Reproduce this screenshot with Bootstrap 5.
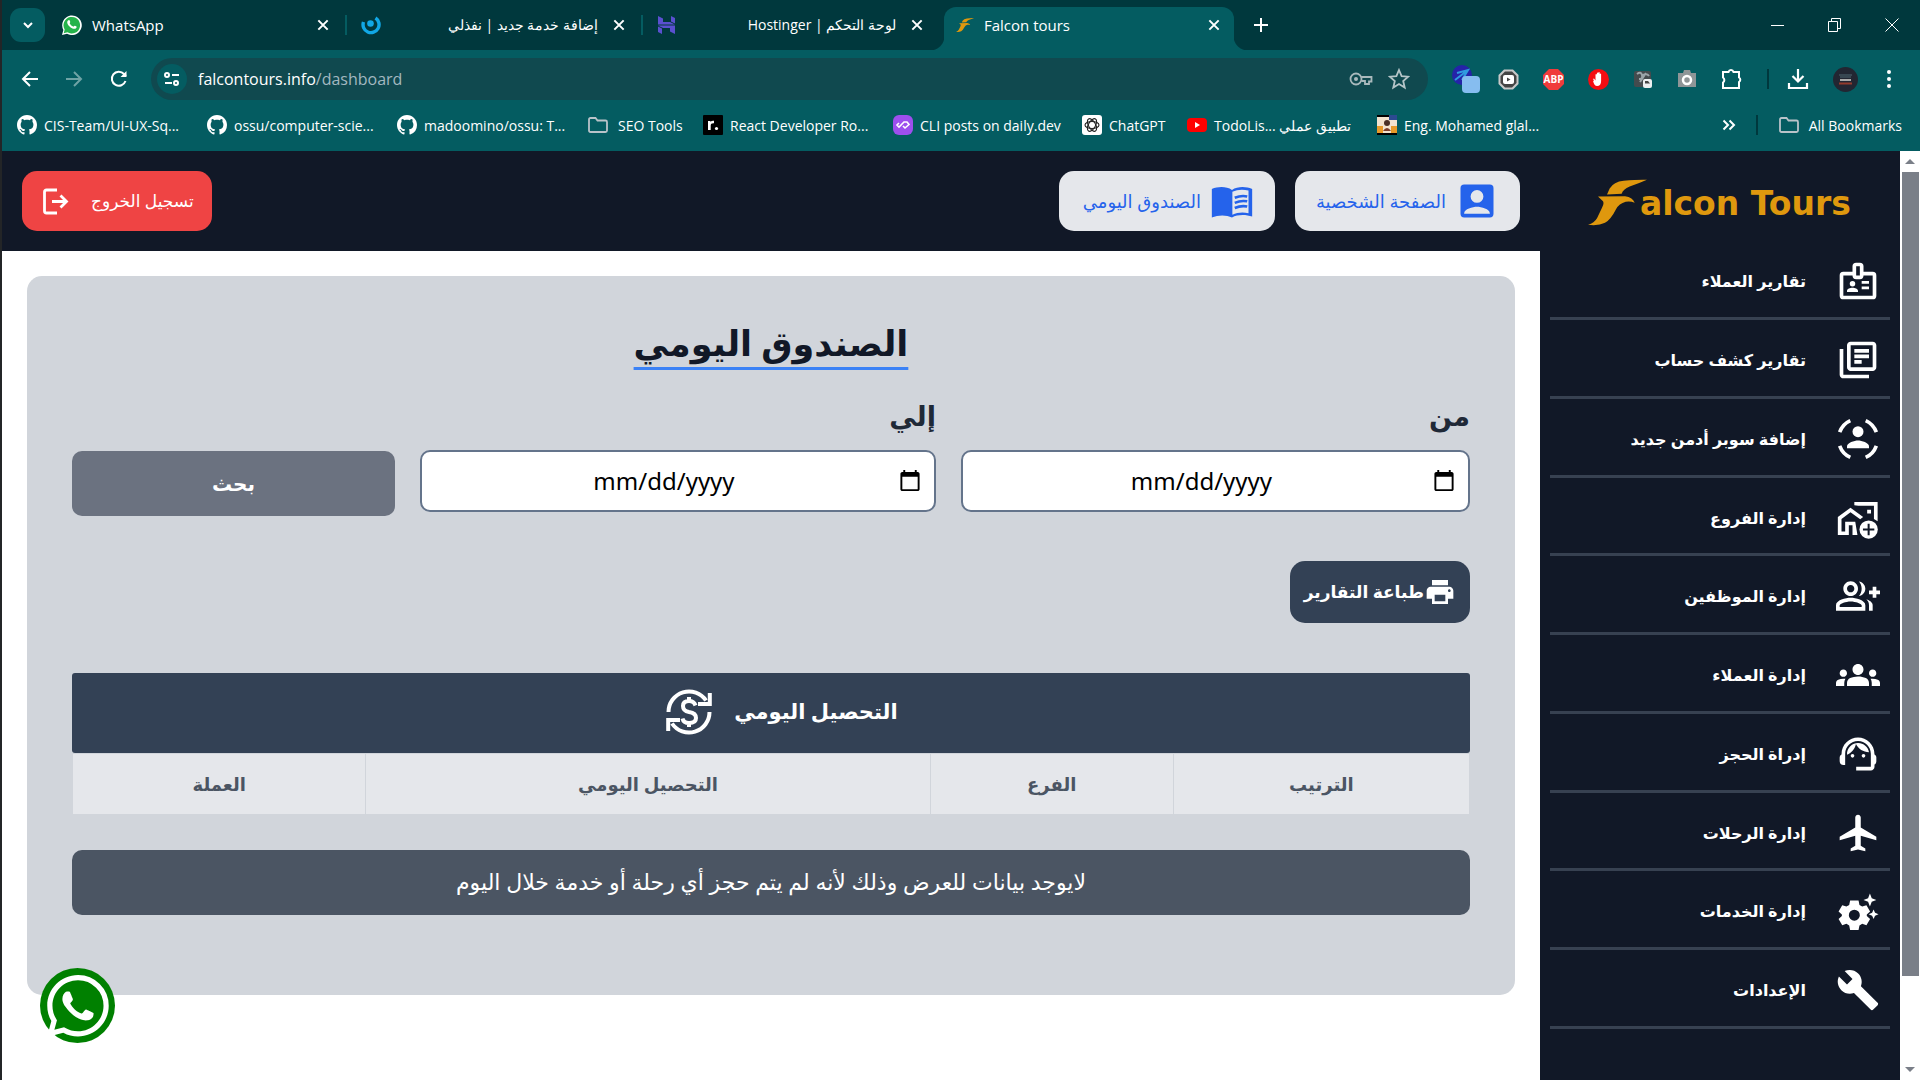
<!DOCTYPE html>
<html lang="ar">
<head>
<meta charset="utf-8">
<meta name="viewport" content="width=device-width, initial-scale=1">
<title>Falcon tours</title>
<link href="https://cdn.jsdelivr.net/npm/bootstrap@5.3.0/dist/css/bootstrap.min.css" rel="stylesheet">
<style>
  :root { --ui: "Open Sans", "Noto Sans", sans-serif; --ar: "Noto Sans", "DejaVu Sans", sans-serif; }
  body { font-family: var(--ui); background: #fff; border-left: 2px solid #232527; min-height: 100vh; overflow: hidden; }
  svg { display: block; flex: none; fill: currentColor; }
  button { border: 0; }
  .plain { background: none; padding: 0; color: inherit; }

  /* browser frame */
  .chrome { background: #045c61; color: #fff; font-size: 15px; }
  .tabstrip { background: #00383d; height: 50px; }
  .tab-search { width: 35px; height: 34px; border-radius: 11px; background: #045c61; color: #fff; margin: 8px 3px 8px 8px; }
  .tab-item { width: 296px; padding: 0 15px 0 14px; height: 40px; gap: 10px; line-height: 20px; }
  .tab-item.first { width: 299px; }
  .tab-item [dir=rtl] { font-size: 14px; padding-right: 4px; }
  .tab-item.split { border-right: 2px solid #045c61; height: 20px; }
  .tab-item.current { width: 290px; margin-left: 5px; height: 43px; margin-top: 7px; padding: 0 13px 7px 12px; background: #045c61; border-radius: 12px 12px 0 0; position: relative; }
  .tab-item.current::before, .tab-item.current::after { content: ""; position: absolute; bottom: 0; width: 14px; height: 14px; }
  .tab-item.current::before { left: -14px; background: radial-gradient(circle at 0 0, #00383d 14px, #045c61 15px); }
  .tab-item.current::after { right: -14px; background: radial-gradient(circle at 100% 0, #00383d 14px, #045c61 15px); }
  .gold { color: #df980e; }
  .win-controls { gap: 43px; padding-right: 21px; }
  .tools { height: 58px; padding: 0 28px 0 18px; gap: 20px; }
  .exts { gap: 24px; }
  .ext-near { margin-left: -6px; }
  .omnibox { height: 42px; border-radius: 21px; background: #10494f; padding: 0 18px 0 6px; margin: 0 4px 0 1px; gap: 11px; color: #b5c5c8; }
  .site-info { width: 30px; height: 30px; border-radius: 50%; background: #045c61; color: #fff; }
  .url-box { color: #a3b8c0; font-size: 16px; }
  .bookmarks { height: 43px; padding: 0 18px 9px 15px; gap: 20px; font-size: 14px; }
  .bookmarks a { color: #fff; gap: 7px; width: 170px; white-space: nowrap; }
  .bookmarks a.w-seo { width: 96px; gap: 9px; }
  .bookmarks a.w-daily { width: 169px; }
  .bookmarks a.w-gpt { width: 85px; }
  .bookmarks a.w-all { width: auto; gap: 9px; }
  .vbar { width: 2px; height: 20px; background: #00383d; }

  /* site */
  .site { font-family: var(--ar); }
  .main-side { background: #111827; width: 360px; padding: 0 10px; }
  .brand { height: 90px; padding: 12px 32px 0 38px; color: #df980e; }
  .brand-text { font: bold 33px/40px "DejaVu Sans", sans-serif; padding-top: 4px; margin-left: -7px; white-space: nowrap; }
  .side-link { color: #fff; font-size: 16px; font-weight: 700; height: 79px; padding: 18px 10px 14px; gap: 30px; border-bottom: 3px solid #374151; }
  .side-link:nth-child(4n) { height: 78px; }
  .side-link:hover { color: #fff; }
  .topbar { background: #111827; height: 100px; padding: 20px; gap: 20px; }
  .chip { height: 60px; border-radius: 15px; background: #e5e7eb; color: #2563eb; font-size: 18px; padding: 0 21px; gap: 9px; }
  .chip.exit { background: #ef4444; color: #fff; font-size: 17px; font-weight: 500; gap: 22px; padding: 0 18px 0 20px; }
  .panel { background: #d1d5db; border-radius: 15px; margin: 25px; padding: 37px 45px 80px; }
  .panel h1 { font-size: 35px; line-height: 60px; font-weight: 700; color: #111827; text-decoration: underline #3b82f6 3px; text-underline-offset: 11px; margin-bottom: 19px; }
  .filters { display: grid; grid-template-columns: 509fr 516fr 323fr; gap: 25px; height: 124px; }
  .filters label { font-size: 27px; font-weight: 600; line-height: 48px; color: #1f2937; margin-bottom: 10px; display: block; }
  .date-box { height: 62px; width: 100%; border: 2px solid #64748b; border-radius: 10px; background: #fff; color: #000; font-size: 24px; padding: 0 10px; }
  .date-box::-webkit-datetime-edit { text-align: center; }
  .go { background: #6b7280; color: #fff; font-size: 20px; font-weight: 700; height: 65px; border-radius: 10px; }
  .print { background: #334155; color: #fff; font-size: 17px; font-weight: 700; height: 62px; border-radius: 15px; padding: 0 14px; margin: 45px 0 50px; }
  .band { background: #334155; color: #fff; height: 80px; border-radius: 3px; font-size: 21px; font-weight: 700; gap: 20px; padding: 0 0 2px 20px; }
  .cash { width: 100%; table-layout: fixed; margin-bottom: 35px; }
  .cash th { height: 61px; background: #e5e7eb; border: 1px solid #d1d5db; color: #4b5563; font-size: 18px; font-weight: 600; text-align: center; }
  .empty { background: #4b5563; color: #fff; height: 65px; border-radius: 10px; font-size: 22px; padding-bottom: 2px; }
  .wa { position: fixed; left: 40px; bottom: 37px; width: 75px; height: 75px; border-radius: 50%; background: green; color: #fff; }
  .scroller { width: 20px; background: #fff; padding: 8px 1px 8px 2px; color: #7a7f88; }
  .thumb { background: #7a7f88; height: 804px; margin-top: 8px; width: 100%; }
</style>
<script src="https://cdn.jsdelivr.net/npm/bootstrap@5.3.0/dist/js/bootstrap.bundle.min.js"></script>
</head>
<body class="d-flex flex-column">
<svg width="0" height="0" class="position-absolute" aria-hidden="true">
  <symbol id="gh" viewBox="0 0 16 16"><path d="M8 0C3.58 0 0 3.58 0 8c0 3.54 2.29 6.53 5.47 7.59.4.07.55-.17.55-.38 0-.19-.01-.82-.01-1.49-2.01.37-2.53-.49-2.69-.94-.09-.23-.48-.94-.82-1.13-.28-.15-.68-.52-.01-.53.63-.01 1.08.58 1.23.82.72 1.21 1.87.87 2.33.66.07-.52.28-.87.51-1.07-1.78-.2-3.64-.89-3.64-3.95 0-.87.31-1.59.82-2.15-.08-.2-.36-1.02.08-2.12 0 0 .67-.21 2.2.82.64-.18 1.32-.27 2-.27s1.36.09 2 .27c1.53-1.04 2.2-.82 2.2-.82.44 1.1.16 1.92.08 2.12.51.56.82 1.27.82 2.15 0 3.07-1.87 3.75-3.65 3.95.29.25.54.73.54 1.48 0 1.07-.01 1.93-.01 2.2 0 .21.15.46.55.38A8.01 8.01 0 0 0 16 8c0-4.42-3.58-8-8-8z"/></symbol>
  <symbol id="x" viewBox="0 0 12 12"><path d="M2 2l8 8M10 2l-8 8" stroke="#fff" stroke-width="1.7" fill="none"/></symbol>
  <symbol id="folder" viewBox="0 0 22 18"><path d="M2 3.500Q2 2 3.500 2H8.500L10.500 4.500H18.500Q20 4.500 20 6V14.500Q20 16 18.500 16H3.500Q2 16 2 14.500Z" fill="none" stroke="#b9c3c9" stroke-width="1.8"/></symbol>
  <symbol id="phone" viewBox="0 0 16 16"><path d="M13.601 2.326A7.850 7.850 0 0 0 7.994 0C3.627 0 .068 3.558.064 7.926c0 1.399.366 2.760 1.057 3.965L0 16l4.204-1.102a7.930 7.930 0 0 0 3.790.965h.004c4.368 0 7.926-3.558 7.930-7.930A7.900 7.900 0 0 0 13.600 2.326zM7.994 14.521a6.600 6.600 0 0 1-3.356-.920l-.240-.144-2.494.654.666-2.433-.156-.251a6.560 6.560 0 0 1-1.007-3.505c0-3.626 2.957-6.584 6.591-6.584a6.560 6.560 0 0 1 4.660 1.931 6.560 6.560 0 0 1 1.928 4.660c-.004 3.639-2.961 6.592-6.592 6.592zm3.615-4.934c-.197-.099-1.170-.578-1.353-.646-.182-.065-.315-.099-.445.099-.133.197-.513.646-.627.775-.114.133-.232.148-.430.050-.197-.100-.836-.308-1.592-.985-.590-.525-.985-1.175-1.103-1.372-.114-.198-.011-.304.088-.403.087-.088.197-.232.296-.346.100-.114.133-.198.198-.330.065-.134.034-.248-.015-.347-.050-.099-.445-1.076-.612-1.470-.160-.389-.323-.335-.445-.340-.114-.007-.247-.007-.380-.007a.730.730 0 0 0-.529.247c-.182.198-.691.677-.691 1.654s.710 1.916.810 2.049c.098.133 1.394 2.132 3.383 2.992.470.205.840.326 1.129.418.475.152.904.129 1.246.080.380-.058 1.171-.480 1.338-.943.164-.464.164-.860.114-.943-.049-.084-.182-.133-.380-.232z"/></symbol>
</svg>

<header class="chrome">
  <div class="tabstrip d-flex align-items-center">
    <button class="tab-search d-flex align-items-center justify-content-center p-0" aria-label="Search tabs"><svg width="14" height="14" viewBox="0 0 14 14"><path d="M3 5l4 4 4-4" stroke="#fff" stroke-width="2" fill="none"/></svg></button>
    <div class="tab-item first split d-flex align-items-center">
      <svg width="20" height="20" viewBox="0 0 20 20"><path d="M0 20l1.400-5A9.800 9.800 0 1 1 5 18.700z" fill="#fff"/><path d="M1.700 18.300l1-3.700A8.300 8.300 0 1 1 5.400 17.300z" fill="#25b34b"/><path d="M6 5.500c1-1 1.700-.5 2.200 1.300.3.900-.8 1.200-.3 2 .8 1.300 1.900 2.200 3.200 2.800.7.300 1-1.200 1.800-.9 2 .8 2.200 1 1.300 2.300-1.200 1.500-3.700.8-5.600-.6-1.800-1.300-4.800-4.800-2.600-6.900z" fill="#fff"/></svg>
      <span class="flex-grow-1">WhatsApp</span><button class="plain" aria-label="Close"><svg width="14" height="14"><use href="#x"/></svg></button>
    </div>
    <div class="tab-item split d-flex align-items-center">
      <svg width="20" height="20" viewBox="0 0 20 20"><path d="M2.500 7a8 8 0 1 0 12-4" fill="none" stroke="#11a8e6" stroke-width="3.400"/><circle cx="9.500" cy="8.500" r="3.300" fill="#11a8e6"/></svg>
      <span class="flex-grow-1" dir="rtl">إضافة خدمة جديد | نفذلي</span><button class="plain" aria-label="Close"><svg width="14" height="14"><use href="#x"/></svg></button>
    </div>
    <div class="tab-item d-flex align-items-center">
      <svg width="20" height="20" viewBox="0 0 20 20"><path d="M1 1l5 2.500V7h7l5 2.500H1zM14 1l4 2v5.500L14 6.500zM18 19l-5-2.500V13H6l-5-2.500h17zM5 19l-4-2v-5.500L5 13.500z" fill="#5a50d0"/></svg>
      <span class="flex-grow-1" dir="rtl">لوحة التحكم | Hostinger</span><button class="plain" aria-label="Close"><svg width="14" height="14"><use href="#x"/></svg></button>
    </div>
    <div class="tab-item current d-flex align-items-center">
      <svg class="gold" width="18" height="18" viewBox="145 86 177 140"><use href="#falcon"/></svg>
      <span class="flex-grow-1">Falcon tours</span><button class="plain" aria-label="Close"><svg width="14" height="14"><use href="#x"/></svg></button>
    </div>
    <button class="plain ms-3 ps-1" aria-label="New tab"><svg width="14" height="14" viewBox="0 0 14 14"><path d="M7 0v14M0 7h14" stroke="#fff" stroke-width="2"/></svg></button>
    <div class="win-controls ms-auto d-flex align-items-center">
      <button class="plain" aria-label="Minimize"><svg width="14" height="14" viewBox="0 0 14 14"><path d="M0 7.500h13" stroke="#fff"/></svg></button>
      <button class="plain" aria-label="Restore"><svg width="14" height="14" viewBox="0 0 14 14"><path d="M.5 3.500h9v10h-9zM3.500 3.500v-3h9v10h-3" stroke="#fff" fill="none"/></svg></button>
      <button class="plain" aria-label="Close window"><svg width="14" height="14" viewBox="0 0 14 14"><path d="M.5.5l13 13M13.500.5l-13 13" stroke="#fff"/></svg></button>
    </div>
  </div>

  <div class="tools d-flex align-items-center">
    <button class="plain me-1" aria-label="Back"><svg width="20" height="20" viewBox="0 0 20 20"><path d="M18 10H3M10 3l-7 7 7 7" stroke="#fff" stroke-width="2" fill="none"/></svg></button>
    <button class="plain me-1" aria-label="Forward"><svg width="20" height="20" viewBox="0 0 20 20"><path d="M2 10h15M10 3l7 7-7 7" stroke="#6fa3a5" stroke-width="2" fill="none"/></svg></button>
    <button class="plain" aria-label="Reload"><svg width="22" height="20" viewBox="0 0 22 20"><path d="M17.500 12A7 7 0 1 1 16 5l2 2" stroke="#fff" stroke-width="2" fill="none"/><path d="M18.500 2v6h-6z" fill="#fff"/></svg></button>
    <div class="omnibox flex-grow-1 d-flex align-items-center">
      <button class="site-info p-0 d-flex align-items-center justify-content-center" aria-label="Site information"><svg width="18" height="18" viewBox="0 0 18 18"><g fill="none" stroke="#fff" stroke-width="2"><circle cx="4" cy="5" r="2"/><path d="M9 5h7M2 13h7"/><circle cx="13" cy="13" r="2"/></g></svg></button>
      <a class="url-box flex-grow-1 text-decoration-none" href="#"><span class="text-white">falcontours.info</span>/dashboard</a>
      <svg width="24" height="18" viewBox="0 0 24 18"><g fill="none" stroke="#a9b9bc" stroke-width="1.800"><circle cx="7" cy="9" r="5.500"/><path d="M12 7h10.500v4.500H20V14h-4v-3h-3.500"/></g><circle cx="7" cy="9" r="2" fill="#a9b9bc"/></svg>
      <svg class="ms-1" width="22" height="22" viewBox="0 0 22 22"><path d="M11 2l2.600 6.100 6.600.6-5 4.300 1.500 6.500-5.700-3.500-5.700 3.500L6.800 13l-5-4.300 6.600-.6z" fill="none" stroke="#b5c5c8" stroke-width="1.800"/></svg>
    </div>
    <div class="exts d-flex align-items-center">
      <svg width="28" height="28" viewBox="0 0 28 28"><circle cx="10" cy="10" r="10" fill="#2523a8"/><path d="M3 15L16 5M5 8l11-3-6 10" stroke="#2f9be0" stroke-width="2" fill="none"/><rect x="10" y="11" width="18" height="17" rx="4" fill="#86bdf0"/></svg>
      <svg class="ext-near" width="21" height="21" viewBox="0 0 21 21"><path d="M6 .5h9L20.500 6v9L15 20.500H6L.5 15V6z" fill="#c9c9c9"/><path d="M7 2.500h7L18.500 7v7L14 18.500H7L2.500 14V7z" fill="#444"/><rect x="5" y="6" width="11" height="9" rx="2" fill="#fff"/><path d="M9 8.500v4l3.500-2z" fill="#444"/></svg>
      <svg width="21" height="21" viewBox="0 0 21 21"><path d="M6 0h9l6 6v9l-6 6H6l-6-6V6z" fill="#f03b3b"/><text x="10.500" y="14" text-anchor="middle" font-family="Open Sans" font-weight="700" font-size="10" fill="#fff">ABP</text></svg>
      <svg width="21" height="21" viewBox="0 0 21 21"><circle cx="10.500" cy="10.500" r="10.500" fill="#f40d12"/><path d="M6 11.500l-1-1.500 1-.5 1.500 2V5.500q.7-1 1.400 0V9V4q.7-1 1.400 0v5V3.500q.7-1 1.400 0V9V5q.7-1 1.400 0v7q0 5-4 5-3 0-4-5z" fill="#fff"/></svg>
      <svg width="20" height="20" viewBox="0 0 20 20"><rect x="1" y="2" width="17" height="16" rx="2" fill="#444b4e"/><path d="M4 5q4-3 5 1t-3 4M10 6q4-2 6 1M7 13l6-9" stroke="#9aa4a8" stroke-width="2" fill="none"/><rect x="10" y="10" width="9" height="9" rx="2" fill="#eceff0"/><path d="M12 12h3l2 2.500h-5z" fill="#444"/></svg>
      <svg width="20" height="20" viewBox="0 0 20 20"><path d="M1 4h5l1-3h6l1 3h5v14H1z" fill="#8f9597"/><circle cx="10" cy="11" r="4" fill="none" stroke="#fff" stroke-width="2.500"/></svg>
      <svg width="22" height="22" viewBox="0 0 22 22"><path d="M2 4h5.500a2.600 2.600 0 0 1 5 0H18v5.500a2.600 2.600 0 0 1 0 4.500v6H2v-5.500a3 3 0 0 0 0-5z" fill="none" stroke="#fff" stroke-width="2"/></svg>
      <div class="vbar"></div>
      <svg class="ext-near" width="22" height="22" viewBox="0 0 22 22"><path d="M11 1v12M5.500 8l5.500 5.500L16.500 8M2 15v5h18v-5" fill="none" stroke="#fff" stroke-width="2.200"/></svg>
      <svg width="25" height="25" viewBox="0 0 25 25"><circle cx="12.500" cy="12.500" r="12.500" fill="#222632"/><path d="M6 8h13M7 10h11" stroke="#4d6670"/><path d="M7 13h11" stroke="#aaa" stroke-width="2"/><path d="M6 16.500h13" stroke="#933a2c" stroke-width="2"/></svg>
      <svg class="ms-1" width="6" height="22" viewBox="0 0 6 22"><circle cx="3" cy="4" r="2"/><circle cx="3" cy="11" r="2"/><circle cx="3" cy="18" r="2"/></svg>
    </div>
  </div>

  <nav class="bookmarks d-flex align-items-center">
    <a href="#" class="d-flex align-items-center text-decoration-none"><svg width="20" height="20"><use href="#gh"/></svg>CIS-Team/UI-UX-Sq...</a>
    <a href="#" class="d-flex align-items-center text-decoration-none"><svg width="20" height="20"><use href="#gh"/></svg>ossu/computer-scie...</a>
    <a href="#" class="d-flex align-items-center text-decoration-none"><svg width="20" height="20"><use href="#gh"/></svg>madoomino/ossu: T...</a>
    <a href="#" class="w-seo d-flex align-items-center text-decoration-none"><svg width="22" height="18"><use href="#folder"/></svg>SEO Tools</a>
    <a href="#" class="d-flex align-items-center text-decoration-none"><svg width="20" height="20" viewBox="0 0 20 20"><rect width="20" height="20" rx="1" fill="#000"/><path d="M5 15V6h2.500v1Q8.500 5.500 11 5.800V8.300Q7.700 8 7.700 10.500V15z" fill="#fff"/><circle cx="13.500" cy="13.500" r="1.600" fill="#fff"/></svg>React Developer Ro...</a>
    <a href="#" class="w-daily d-flex align-items-center text-decoration-none"><svg width="20" height="20" viewBox="0 0 20 20"><rect width="20" height="20" rx="6" fill="#9d4fee"/><path d="M6 8l-2 2 2 2 5-5 3 0 2 2.500-4 3.500-2-2" fill="none" stroke="#fff" stroke-width="1.600"/></svg>CLI posts on daily.dev</a>
    <a href="#" class="w-gpt d-flex align-items-center text-decoration-none"><svg width="20" height="20" viewBox="0 0 20 20"><rect width="20" height="20" rx="3" fill="#fff"/><g fill="none" stroke="#222" stroke-width="1.100"><ellipse cx="10" cy="10" rx="7" ry="3.500"/><ellipse cx="10" cy="10" rx="7" ry="3.500" transform="rotate(60 10 10)"/><ellipse cx="10" cy="10" rx="7" ry="3.500" transform="rotate(120 10 10)"/></g></svg>ChatGPT</a>
    <a href="#" class="d-flex align-items-center text-decoration-none"><svg width="20" height="20" viewBox="0 0 20 20"><rect y="3" width="20" height="14" rx="4" fill="#f00"/><path d="M8 7v6l5-3z" fill="#fff"/></svg><span>TodoLis... <bdi>تطبيق عملي</bdi></span></a>
    <a href="#" class="d-flex align-items-center text-decoration-none"><svg width="20" height="20" viewBox="0 0 20 20"><rect width="20" height="20" fill="#000"/><rect y="2" width="20" height="16" fill="#f3e3cf"/><path d="M0 11h6v7H0zM14 11h6v7h-6z" fill="#e89a2a"/><path d="M12 0h8v5h-8z" fill="#2c4a91"/><circle cx="10" cy="8" r="3" fill="#4a2f26"/><path d="M6 16q4-6 8 0z" fill="#7c3c2a"/></svg>Eng. Mohamed glal...</a>
    <span class="ms-auto"><svg width="14" height="14" viewBox="0 0 14 14"><path d="M1.500 2.500L6 7l-4.500 4.500M7.500 2.500L12 7l-4.500 4.500" fill="none" stroke="#fff" stroke-width="2"/></svg></span>
    <div class="vbar"></div>
    <a href="#" class="w-all d-flex align-items-center text-decoration-none"><svg width="22" height="18"><use href="#folder"/></svg>All Bookmarks</a>
  </nav>
</header>

<div class="site d-flex flex-grow-1" dir="ltr">
  <div class="flex-grow-1" dir="rtl">
    <div class="topbar d-flex align-items-center">
      <button class="chip d-flex align-items-center"><svg width="44" height="44" viewBox="0 0 24 24"><path fill-rule="evenodd" d="M5 3h14a2 2 0 0 1 2 2v14a2 2 0 0 1-2 2H5a2 2 0 0 1-2-2V5a2 2 0 0 1 2-2zm7 3a3.500 3.500 0 1 0 0 7 3.500 3.500 0 0 0 0-7zM5 19h14v-.300c0-2.300-4.700-3.500-7-3.500s-7 1.200-7 3.500z"/></svg>الصفحة الشخصية</button>
      <button class="chip ps-4 d-flex align-items-center"><svg width="44" height="44" viewBox="0 0 24 24"><path d="M1 5.500C4.500 4 9 4 12 6c3-2 7.500-2 11-.5V20.500c-3.500-1.200-8-1.200-11 .5-3-1.500-7.500-1.500-11 0z"/><path d="M12.200 7C15 5.600 18 5.500 21 6.300V18.700c-3-.7-6-.5-8.800.8z" fill="#e5e7eb"/><path d="M13.500 10.200Q17 8.800 20.300 9.500M13.500 13Q17 11.500 20.300 12.200M13.500 15.800Q17 14.300 20.300 15" fill="none" stroke="#2563eb" stroke-width="1.400"/></svg>الصندوق اليومي</button>
      <button class="chip exit d-flex align-items-center me-auto">تسجيل الخروج<svg width="27" height="27" viewBox="0 0 27 27"><path d="M15 2H4.500Q2.500 2 2.500 4V23Q2.500 25 4.500 25H15M10 13.500H24.500M18.500 7.500l6 6-6 6" fill="none" stroke="#fff" stroke-width="2.800"/></svg></button>
    </div>

    <main class="panel">
      <h1 class="text-center">الصندوق اليومي</h1>
      <form class="filters">
        <div><label for="from">من</label><input class="date-box" id="from" type="date" dir="ltr" lang="en-US"></div>
        <div><label for="to">إلي</label><input class="date-box" id="to" type="date" dir="ltr" lang="en-US"></div>
        <button class="go align-self-end" type="button">بحث</button>
      </form>
      <button class="print d-flex align-items-center"><svg width="32" height="32" viewBox="0 0 24 24"><path d="M19 8H5c-1.660 0-3 1.340-3 3v6h4v4h12v-4h4v-6c0-1.660-1.340-3-3-3zm-3 11H8v-5h8v5zm3-7c-.550 0-1-.450-1-1s.450-1 1-1 1 .450 1 1-.450 1-1 1zm-1-9H6v4h12V3z"/></svg>طباعة التقارير</button>
      <div class="band d-flex align-items-center justify-content-center"><span>التحصيل اليومي</span><svg width="50" height="50" viewBox="0 0 50 50"><g fill="none" stroke="#fff" stroke-width="4"><path d="M4.500 25A20.500 20.500 0 0 1 42 13.500M45.500 25A20.500 20.500 0 0 1 8 36.500"/><path d="M45.800 6v11H34M4.200 44V33H16"/><path d="M31.500 18.500q-1.500-4.500-6.500-4.500-6 0-6 5t6 6q7 1 7 6t-7 5q-5.500 0-6.500-4.500M25 10v4M25 36v4"/></g></svg></div>
      <table class="cash">
        <colgroup><col style="width:21.2%"><col style="width:17.4%"><col style="width:40.4%"><col style="width:21%"></colgroup>
        <thead><tr><th>الترتيب</th><th>الفرع</th><th>التحصيل اليومي</th><th>العملة</th></tr></thead>
      </table>
      <div class="empty d-flex align-items-center justify-content-center">لايوجد بيانات للعرض وذلك لأنه لم يتم حجز أي رحلة أو خدمة خلال اليوم</div>
    </main>
  </div>

  <aside class="main-side flex-shrink-0" dir="rtl">
    <div class="brand d-flex align-items-center" dir="ltr">
      <svg width="59" height="47" viewBox="145 86 177 140"><g id="falcon"><path d="M322 88Q296 87 252 91Q222 94 210 114L202 132L246 130Q250 116 270 108Q300 98 322 88z"/><path d="M175 138L256 137Q280 140 285 157Q272 151 258 154Q238 160 229 176Q214 206 196 217Q176 227 145 223Q164 217 172 203L187 172Q194 160 190 152z"/></g></svg>
      <span class="brand-text">alcon Tours</span>
    </div>
    <nav>
    <a href="#" class="side-link d-flex align-items-center text-decoration-none"><svg width="44" height="44" viewBox="0 0 24 24"><path fill-rule="evenodd" d="M20 7h-5V4a2 2 0 0 0-2-2h-2a2 2 0 0 0-2 2v3H4a2 2 0 0 0-2 2v11a2 2 0 0 0 2 2h16a2 2 0 0 0 2-2V9a2 2 0 0 0-2-2zM11 4h2v5h-2zM20 20H4V9h5a2 2 0 0 0 2 2h2a2 2 0 0 0 2-2h5z"/><circle cx="9" cy="13.500" r="1.500"/><path d="M6 18v-.600c0-1.200 1.700-1.700 3-1.700s3 .5 3 1.700v.6zM14 12h4v1.500h-4zM14 15h4v1.500h-4z"/></svg>تقارير العملاء</a>
    <a href="#" class="side-link d-flex align-items-center text-decoration-none"><svg width="44" height="44" viewBox="0 0 24 24"><path fill-rule="evenodd" d="M4 6H2v14c0 1.100.9 2 2 2h14v-2H4zM20 2H8c-1.100 0-2 .9-2 2v12c0 1.100.9 2 2 2h12c1.100 0 2-.9 2-2V4c0-1.100-.9-2-2-2zm0 14H8V4h12zM10 9h8v2h-8zM10 12h4v2h-4zM10 6h8v2h-8z"/></svg>تقارير كشف حساب</a>
    <a href="#" class="side-link d-flex align-items-center text-decoration-none"><svg width="44" height="44" viewBox="0 0 24 24"><circle cx="12" cy="8" r="3"/><path d="M6 17v-1c0-2 4-3.200 6-3.200s6 1.200 6 3.200v1z"/><path d="M2 8.300A11 11 0 0 1 7.800 2M16.200 2A11 11 0 0 1 22 8.300M22 15.700A11 11 0 0 1 16.200 22M7.800 22A11 11 0 0 1 2 15.700" fill="none" stroke="#fff" stroke-width="2"/></svg>إضافة سوبر أدمن جديد</a>
    <a href="#" class="side-link d-flex align-items-center text-decoration-none"><svg width="44" height="44" viewBox="0 0 24 24"><path fill-rule="evenodd" d="M1 21.300V11.500L7.900 6.400l6.900 5-1.600 1.300-5.300-3.800L3 12.500V19.300h2V14h5.500l1.200 7.300H9V16H7v5.300z"/><path d="M10 3.300H22.700V13.800l-2-1.200V5.300H12.200L10 5zM17 7.500h2.100v2.100H17z"/><circle cx="17.800" cy="18.300" r="5.900" fill="#111827"/><circle cx="17.800" cy="18.300" r="5"/><path d="M17.800 15.200v6.200M14.700 18.300h6.200" stroke="#111827" stroke-width="1.100"/></svg>إدارة الفروع</a>
    <a href="#" class="side-link d-flex align-items-center text-decoration-none"><svg width="44" height="44" viewBox="0 0 24 24"><path fill-rule="evenodd" d="M22 9V7h-2v2h-2v2h2v2h2v-2h2V9zM8 12c2.210 0 4-1.790 4-4s-1.790-4-4-4-4 1.790-4 4 1.790 4 4 4zm0-6c1.100 0 2 .9 2 2s-.9 2-2 2-2-.9-2-2 .9-2 2-2zm0 7c-2.670 0-8 1.340-8 4v3h16v-3c0-2.660-5.330-4-8-4zm6 5H2v-.990C2.200 16.290 5.300 15 8 15s5.800 1.290 6 2zM12.510 4.050C13.430 5.110 14 6.490 14 8s-.570 2.890-1.490 3.950C14.470 11.700 16 10.040 16 8s-1.530-3.700-3.490-3.950zM16.530 13.830C17.420 14.660 18 15.700 18 17v3h2v-3c0-1.450-1.590-2.510-3.470-3.170z"/></svg>إدارة الموظفين</a>
    <a href="#" class="side-link d-flex align-items-center text-decoration-none"><svg width="44" height="44" viewBox="0 0 24 24"><path d="M4 13c1.100 0 2-.9 2-2s-.9-2-2-2-2 .9-2 2 .9 2 2 2zm1.130 1.100C4.760 14.040 4.390 14 4 14c-.990 0-1.930.210-2.780.580C.480 14.900 0 15.620 0 16.430V18h4.500v-1.610c0-.830.230-1.610.630-2.290zM20 13c1.100 0 2-.9 2-2s-.9-2-2-2-2 .9-2 2 .9 2 2 2zm4 3.430c0-.810-.480-1.530-1.220-1.850-.850-.370-1.790-.580-2.780-.580-.390 0-.760.040-1.130.100.400.680.630 1.460.630 2.290V18H24zM16.240 13.650c-1.170-.520-2.610-.9-4.240-.9s-3.070.390-4.240.9C6.680 14.130 6 15.210 6 16.390V18h12v-1.610c0-1.180-.680-2.260-1.760-2.740zM9 9c0 1.660 1.340 3 3 3s3-1.340 3-3-1.340-3-3-3-3 1.340-3 3z"/></svg>إدارة العملاء</a>
    <a href="#" class="side-link d-flex align-items-center text-decoration-none"><svg width="44" height="44" viewBox="0 0 24 24"><path d="M21 12.220C21 6.730 16.740 3 12 3c-4.690 0-9 3.650-9 9.280-.6.340-1 .980-1 1.720v2c0 1.100.9 2 2 2h1v-6.100c0-3.870 3.130-7 7-7s7 3.130 7 7V19h-8v2h8c1.100 0 2-.9 2-2v-1.220c.590-.310 1-.920 1-1.640v-2.300c0-.7-.410-1.310-1-1.620z"/><circle cx="9" cy="13" r="1"/><circle cx="15" cy="13" r="1"/><path d="M18 11.030C17.520 8.180 15.040 6 12.050 6c-3.030 0-6.290 2.510-6.030 6.450 2.470-1.010 4.330-3.210 4.860-5.890 1.310 2.630 4 4.440 7.120 4.470z"/></svg>إدراة الحجز</a>
    <a href="#" class="side-link d-flex align-items-center text-decoration-none"><svg width="44" height="44" viewBox="0 0 24 24"><path d="M22 16v-2l-8.500-5V3.500c0-.830-.670-1.500-1.500-1.500s-1.500.670-1.500 1.500V9L2 14v2l8.500-2.500V19L8 20.500V22l4-1 4 1v-1.500L13.500 19v-5.500z"/></svg>إدارة الرحلات</a>
    <a href="#" class="side-link d-flex align-items-center text-decoration-none"><svg width="44" height="44" viewBox="0 0 24 24"><g transform="translate(10 14.300)"><path fill-rule="evenodd" d="M-2.300-8h4.600l.5 2.400 1.500.9 2.300-.8 2 3.500-1.800 1.600v.8L8.600 2l-2 3.500-2.300-.8-1.500.9L2.300 8h-4.600l-.5-2.400-1.500-.9-2.300.8-2-3.500 1.800-1.600v-.8L-8.600-2l2-3.500 2.300.8 1.500-.9zM0-3a3 3 0 1 0 0 6 3 3 0 0 0 0-6z"/></g><path d="M18.500 2.500l1 2.500 2.500 1-2.500 1-1 2.500-1-2.500-2.500-1 2.500-1zM20.500 11.200l.8 1.800 1.900.8-1.900.8-.8 1.800-.8-1.800-1.900-.8 1.900-.8z"/></svg>إدارة الخدمات</a>
    <a href="#" class="side-link d-flex align-items-center text-decoration-none"><svg width="44" height="44" viewBox="0 0 24 24"><path d="M22.700 19l-9.100-9.100c.9-2.300.4-5-1.500-6.900-2-2-5-2.400-7.400-1.300L9 6 6 9 1.600 4.700C.4 7.100.9 10.100 2.900 12.100c1.900 1.900 4.600 2.400 6.900 1.500l9.100 9.100c.4.400 1 .4 1.400 0l2.300-2.300c.5-.4.5-1.100.1-1.400z"/></svg>الإعدادات</a>
    </nav>
  </aside>

  <div class="scroller flex-shrink-0 d-flex flex-column align-items-center">
    <svg width="10" height="5" viewBox="0 0 10 5"><path d="M5 0l5 5H0z"/></svg>
    <div class="thumb"></div>
    <svg class="mt-auto" width="10" height="5" viewBox="0 0 10 5"><path d="M0 0h10L5 5z"/></svg>
  </div>
</div>
<a class="wa d-flex align-items-center justify-content-center" href="#" aria-label="WhatsApp"><svg width="62" height="62"><use href="#phone"/></svg></a>
</body>
</html>
